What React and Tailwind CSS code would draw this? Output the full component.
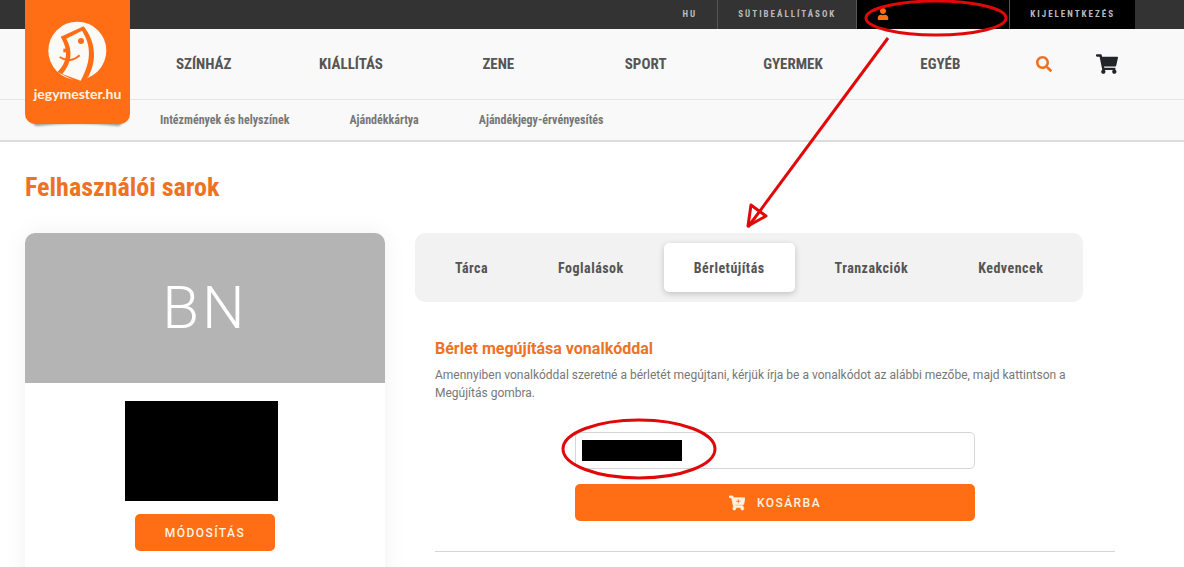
import { FaCartPlus, FaSearch, FaShoppingCart, FaUser } from "react-icons/fa";

const categories = ["Színház", "Kiállítás", "Zene", "Sport", "Gyermek", "Egyéb"];

const subLinks = ["Intézmények és helyszínek", "Ajándékkártya", "Ajándékjegy-érvényesítés"];

const tabs = ["Tárca", "Foglalások", "Bérletújítás", "Tranzakciók", "Kedvencek"];

function Logo() {
  return (
    <a href="#" className="absolute left-[25px] top-0 z-10 w-[105px]">
      <span className="relative z-10 flex h-[124px] flex-col items-center rounded-b-[10px] bg-[#ff6e15] pt-5">
        <svg viewBox="4 6 192 192" className="h-16 w-16" aria-hidden="true">
          <circle cx="98" cy="98" r="87" fill="#fbfaf6" />
          <path d="M48 56 L117 25 C150 66 160 124 131 176 L108 197 L38 162 C64 136 76 104 48 56 Z" fill="#ff6e15" />
          <path d="M65 62 L112 38 C136 76 145 122 108 188 L53 168 C80 136 86 100 65 62 Z" fill="#fbfaf6" />
          <path d="M56 92h14v11h-14z" fill="#ff6e15" />
          <circle cx="109" cy="69" r="9" fill="#ff6e15" />
          <path d="M45 117 Q76 138 105 112" fill="none" stroke="#ff6e15" strokeWidth="6" />
        </svg>
        <span className="font-[Lato,sans-serif] text-sm font-bold leading-5 text-[#fff3e0]">jegymester.hu</span>
      </span>
      <svg viewBox="0 0 105 12" className="-mt-[6px] block h-3 w-full" aria-hidden="true">
        <defs>
          <filter id="soft" x="-10%" y="-50%" width="120%" height="200%">
            <feGaussianBlur stdDeviation="1" />
          </filter>
        </defs>
        <path d="M4 2 L101 2 L94 8 Q52 3 11 8 Z" fill="#999" filter="url(#soft)" />
      </svg>
    </a>
  );
}

function TopBar() {
  return (
    <div className="flex h-[29px] justify-end bg-[#333] pr-[49px] font-['Roboto_Condensed','Liberation_Sans_Narrow',Roboto,sans-serif] text-[9px] font-bold uppercase tracking-[2px] text-[#bbb]">
      <a href="#" className="flex items-center px-5">HU</a>
      <a href="#" className="flex items-center border-l border-[#555] px-5">Sütibeállítások</a>
      <a href="#" aria-label="Profil" className="flex w-[153px] border-l border-[#555] bg-black pl-5 pt-2">
        <FaUser className="h-3 w-3 text-[#ff6e15]" />
      </a>
      <a href="#" className="flex items-center border-l border-[#555] bg-black px-5">Kijelentkezés</a>
    </div>
  );
}

function Header() {
  return (
    <header className="relative border-b-2 border-[#ddd] bg-[#f9f9f9] font-['Roboto_Condensed','Liberation_Sans_Narrow',Roboto,sans-serif] font-bold">
      <TopBar />
      <Logo />
      <div className="flex h-[71px] items-center border-b border-[#e5e5e5] pl-[130px] pr-11">
        <nav className="grid flex-1 grid-cols-6 text-center text-[15px] uppercase text-[#555]">
          {categories.map((name) => (
            <a key={name} href="#">{name}</a>
          ))}
        </nav>
        <button aria-label="Keresés" className="flex w-[60px] justify-center text-[#ef7224]">
          <FaSearch className="h-4 w-4" />
        </button>
        <a href="#" aria-label="Kosár" className="flex w-[66px] justify-center text-[#212529]">
          <FaShoppingCart className="h-5 w-[22px]" />
        </a>
      </div>
      <nav className="flex h-10 items-center gap-[60px] pl-40 text-xs text-[#777]">
        {subLinks.map((name) => (
          <a key={name} href="#">{name}</a>
        ))}
      </nav>
    </header>
  );
}

function ProfileCard() {
  return (
    <aside className="flex min-h-[360px] flex-col items-center rounded-[10px] bg-white shadow-[0_0_25px_rgba(0,0,0,0.06)]">
      <div className="flex h-[150px] w-full items-center justify-center rounded-t-[10px] bg-[#b4b4b4] text-[60px] font-light tracking-[3px] text-white">
        BN
      </div>
      <div className="mr-2 mt-[18px] h-[100px] w-[153px] bg-black" />
      <button className="mt-[13px] h-[37px] rounded-[5px] bg-[#ff6e15] px-[30px] text-xs font-medium uppercase tracking-[0.12em] text-[#fff3e0]">
        Módosítás
      </button>
    </aside>
  );
}

function Tabs() {
  return (
    <div role="tablist" className="flex w-fit gap-[10px] rounded-[10px] bg-[#f2f2f2] p-[10px] font-['Roboto_Condensed','Liberation_Sans_Narrow',Roboto,sans-serif] text-sm font-bold tracking-[0.035em] text-[#555]">
      {tabs.map((name) => {
        const isActive = name === "Bérletújítás";
        return (
          <button
            key={name}
            role="tab"
            aria-selected={isActive}
            className={`h-[49px] rounded-[5px] px-[30px] ${
              isActive ? "bg-white shadow-[0_2px_6px_rgba(0,0,0,0.2)]" : ""
            }`}
          >
            {name}
          </button>
        );
      })}
    </div>
  );
}

function RenewalForm() {
  return (
    <section className="mt-[35px] px-5">
      <h2 className="text-base font-bold text-[#ef7224]">Bérlet megújítása vonalkóddal</h2>
      <p className="mt-[5px] text-xs leading-[18px] text-[#777]">
        Amennyiben vonalkóddal szeretné a bérletét megújtani, kérjük írja be a vonalkódot az alábbi mezőbe, majd
        kattintson a Megújítás gombra.
      </p>
      <form className="mx-auto mt-[30px] flex max-w-[400px] flex-col gap-[15px]">
        <div className="relative">
          <input
            type="text"
            aria-label="Vonalkód"
            className="block h-[37px] w-full rounded-[5px] border border-[#d6d6d6] bg-white px-3 text-xs"
          />
          <div className="absolute left-[7px] top-2 h-[21px] w-[100px] bg-black" />
        </div>
        <button
          type="button"
          className="flex h-[37px] items-center justify-center gap-3 rounded-[5px] bg-[#ff6e15] text-xs font-medium uppercase tracking-[0.12em] text-[#fff3e0]"
        >
          <FaCartPlus className="h-4 w-4 stroke-[#fff3e0] stroke-[24]" />
          Kosárba
        </button>
      </form>
      <hr className="mt-[30px] border-[#d6d6d6]" />
    </section>
  );
}

// Red pen marks drawn over the page
function Marks() {
  return (
    <svg
      width="1184"
      height="567"
      viewBox="0 0 1184 567"
      className="pointer-events-none absolute left-0 top-0 z-20 max-w-none"
      fill="none"
      stroke="#e00808"
      strokeWidth="3"
      aria-hidden="true"
    >
      <ellipse cx="936" cy="18" rx="70" ry="17" />
      <path d="M888 38 L748 227" />
      <path d="M748 226 L751 205 L766 216 Z" strokeLinejoin="round" />
      <ellipse cx="639" cy="449" rx="76" ry="29" />
    </svg>
  );
}

export default function App() {
  return (
    <div className="relative h-screen overflow-hidden bg-white font-[Roboto,sans-serif]">
      <Header />
      <main className="pl-[25px] pr-[49px] pt-7">
        <h1 className="font-['Roboto_Condensed','Liberation_Sans_Narrow',Roboto,sans-serif] text-[26px] font-bold leading-[34px] text-[#ef7224]">
          Felhasználói sarok
        </h1>
        <div className="mt-[29px] grid grid-cols-[1fr_2fr] gap-[30px]">
          <ProfileCard />
          <div>
            <Tabs />
            <RenewalForm />
          </div>
        </div>
      </main>
      <Marks />
    </div>
  );
}
